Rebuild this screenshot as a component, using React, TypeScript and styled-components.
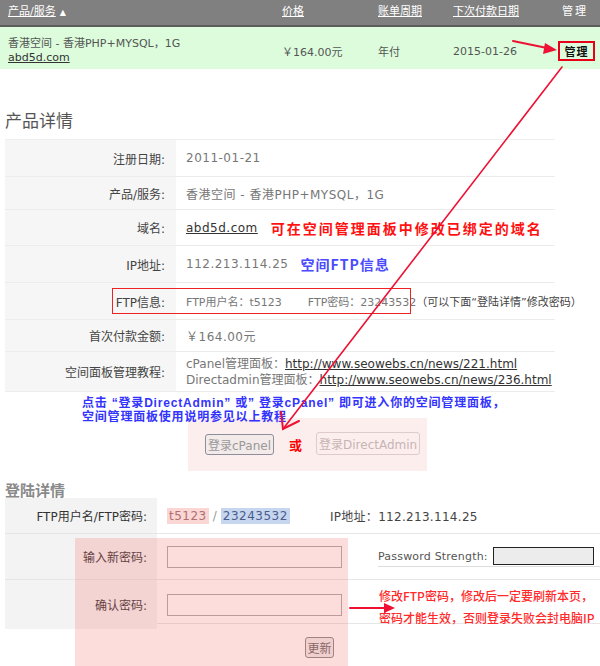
import styled, { createGlobalStyle, css } from "styled-components";

const GlobalStyle = createGlobalStyle`
  * {
    margin: 0;
    padding: 0;
    box-sizing: border-box;
  }

  body {
    background: #ffffff;
    font-family: "DejaVu Sans", "Noto Sans CJK SC", sans-serif;
    font-size: 12px;
    color: #555;
    overflow: hidden;
  }
`;

const Page = styled.div`
  position: relative;
  width: 600px;
  height: 666px;
  overflow: hidden;
`;

// tabela de produtos (topo)
const ProductRow = styled.div<{ $head?: boolean }>`
  display: grid;
  grid-template-columns: 274px 96px 75px 104px 1fr;
  align-items: center;
  padding-left: 8px;
  font-size: 11px;

  ${(p) =>
    p.$head
      ? css`
          height: 27px;
          padding-bottom: 5px;
          background: #808080;
          border-bottom: 2px solid #5c5c5c;
          color: #fff;
        `
      : css`
          height: 42px;
          padding-top: 6px;
          background: #dcfcdc;
          color: #555;
        `}
`;

const HeadLink = styled.span`
  text-decoration: underline;
  color: #fff;
  white-space: nowrap;
`;

const SortMark = styled.span`
  font-size: 8px;
  margin-left: 4px;
  display: inline-block;
`;

const HeadPlain = styled.span`
  padding-left: 5px;
  letter-spacing: 2px;
`;

const ProductName = styled.div`
  line-height: 14px;
  color: #555;
`;

const UnderLink = styled.span`
  color: #333;
  text-decoration: underline;
`;

const ManageBox = styled.span`
  display: inline-flex;
  align-items: center;
  justify-content: center;
  width: 37px;
  height: 20px;
  margin-left: 1px;
  border: 2px solid #e8001a;
  color: #111;
  font-weight: bold;
  font-size: 11px;
  letter-spacing: 1px;
`;

const SectionTitle = styled.h2`
  font-family: "Noto Sans CJK SC", sans-serif;
  font-size: 17px;
  font-weight: 400;
  color: #555;
  line-height: 20px;
  margin: 41px 0 9px 5px;
`;

// tabela de detalhes
const DetailTable = styled.div`
  width: 550px;
  margin-left: 5px;
  border-top: 1px solid #eee;
`;

const DetailRow = styled.div<{ $h: number }>`
  position: relative;
  display: grid;
  grid-template-columns: 171px 1fr;
  height: ${(p) => p.$h}px;
  border-bottom: 1px solid #ececec;
`;

const Label = styled.div`
  display: flex;
  align-items: center;
  justify-content: flex-end;
  padding-right: 11px;
  background: #f6f6f6;
  color: #444;
  font-size: 12px;
`;

const Value = styled.div<{ $small?: boolean }>`
  display: flex;
  align-items: center;
  padding-left: 10px;
  color: #777;
  white-space: nowrap;
  font-size: ${(p) => (p.$small ? "11px" : "12px")};
  letter-spacing: ${(p) => (p.$small ? "0" : "0.5px")};
`;

const ValueLines = styled.div`
  display: flex;
  flex-direction: column;
  justify-content: center;
  padding-left: 10px;
  color: #777;
  line-height: 16px;
  white-space: nowrap;
`;

const RedNote = styled.span`
  margin-left: 13px;
  font-family: "Noto Sans CJK SC", sans-serif;
  font-size: 14px;
  font-weight: bold;
  color: #ff1111;
  letter-spacing: 2px;
`;

const BlueNote = styled.span`
  margin-left: 12px;
  font-family: "Noto Sans CJK SC", sans-serif;
  font-size: 14px;
  font-weight: bold;
  color: #4a4aff;
  letter-spacing: 1px;
`;

const FtpHint = styled.span`
  color: #444;
  font-size: 11px;
  letter-spacing: 0;
`;

const Gap = styled.span<{ $w: number }>`
  display: inline-block;
  width: ${(p) => p.$w}px;
`;

const FtpFrame = styled.div`
  position: absolute;
  top: 5px;
  left: 107px;
  width: 299px;
  height: 26px;
  border: 1px solid #ee2222;
  pointer-events: none;
`;

const HintBlue = styled.p`
  padding-left: 82px;
  margin-top: 4px;
  font-family: "Liberation Sans", "Noto Sans CJK SC", sans-serif;
  font-size: 12px;
  font-weight: bold;
  line-height: 14px;
  color: #3333ff;
  letter-spacing: 0.8px;
  white-space: pre;
`;

const ButtonBox = styled.div`
  display: flex;
  align-items: center;
  width: 239px;
  height: 53px;
  margin: -6px 0 0 188px;
  padding-left: 17px;
  background: #fdeeee;
`;

const PanelButton = styled.button<{ $off?: boolean }>`
  height: ${(p) => (p.$off ? "23px" : "21px")};
  padding: 0 2px;
  border-radius: 3px;
  font-family: "DejaVu Sans", "Noto Sans CJK SC", sans-serif;
  font-size: 12px;
  background: ${(p) => (p.$off ? "transparent" : "#f3eaea")};
  border: 1px solid ${(p) => (p.$off ? "#dccccc" : "#8d8d9c")};
  color: ${(p) => (p.$off ? "#c6b4b4" : "#999")};
  margin-top: ${(p) => (p.$off ? "-3px" : "0")};
`;

const OrText = styled.span`
  margin: 0 14px 0 15px;
  font-family: "Noto Sans CJK SC", sans-serif;
  font-size: 13px;
  font-weight: bold;
  color: #f00;
`;

const SubTitle = styled.h3`
  font-family: "Noto Sans CJK SC", sans-serif;
  font-size: 15px;
  font-weight: bold;
  color: #8a8a8a;
  line-height: 18px;
  margin: 10px 0 -1px 5px;
`;

// detalhes de login
const LoginArea = styled.div`
  position: relative;
  padding-left: 5px;
`;

const LoginRow = styled.div<{ $h: number }>`
  display: grid;
  grid-template-columns: 152px 1fr;
  height: ${(p) => p.$h}px;
  border-bottom: 1px solid #e6e6e6;
`;

const LoginLabel = styled(Label)`
  padding-right: 10px;
  background: #f3f3f3;
  color: #333;
`;

const LoginValue = styled.div`
  display: flex;
  align-items: center;
  padding-left: 10px;
  color: #777;
  white-space: nowrap;
`;

const Tag = styled.span<{ $tone: "pink" | "blue" }>`
  padding: 1px 2px;
  font-size: 12px;
  letter-spacing: 0.5px;
  background: ${(p) => (p.$tone === "pink" ? "#fad6d4" : "#c6d6ef")};
  color: ${(p) => (p.$tone === "pink" ? "#b07070" : "#4a5c8c")};
`;

const Slash = styled.span`
  margin: 0 4px;
  color: #999;
`;

const IpText = styled.span`
  margin-left: 40px;
  color: #444;
  letter-spacing: 0.3px;
`;

const PassInput = styled.input`
  width: 175px;
  height: 22px;
  border: 1px solid #aaa;
  background: #fff;
  outline: none;
`;

const Strength = styled.div`
  display: flex;
  align-items: center;
  flex: 1;
  margin-left: 36px;
  height: 21px;
  border-bottom: 1px solid #ddd;
  font-size: 11px;
  color: #555;
  letter-spacing: 0.2px;
`;

const StrengthBar = styled.span`
  width: 101px;
  height: 18px;
  margin-left: 5px;
  background: #ececec;
  border: 1px solid #222;
`;

const WarnText = styled.p`
  margin-left: 37px;
  padding-top: 5px;
  font-family: "Noto Sans CJK SC", sans-serif;
  font-size: 12px;
  font-weight: 500;
  line-height: 22px;
  color: #ff2a2a;
  white-space: nowrap;
`;

const SubmitRow = styled.div`
  padding: 13px 0 0 300px;
`;

const SubmitButton = styled.button`
  width: 29px;
  height: 21px;
  border: 1px solid #888;
  border-radius: 3px;
  background: #eee;
  color: #666;
  font-family: "Noto Sans CJK SC", sans-serif;
  font-size: 12px;
`;

const PinkVeil = styled.div`
  position: absolute;
  top: 40px;
  left: 75px;
  width: 273px;
  height: 140px;
  background: rgba(248, 110, 110, 0.24);
  pointer-events: none;
`;

const Marks = styled.svg`
  position: absolute;
  top: 0;
  left: 0;
  pointer-events: none;
`;

export default function App() {
  return (
    <>
      <GlobalStyle />
      <Page>
        <ProductRow $head>
          <span>
            <HeadLink>产品/服务</HeadLink>
            <SortMark>▲</SortMark>
          </span>
          <HeadLink>价格</HeadLink>
          <HeadLink>账单周期</HeadLink>
          <HeadLink>下次付款日期</HeadLink>
          <HeadPlain>管理</HeadPlain>
        </ProductRow>
        <ProductRow>
          <ProductName>
            香港空间 - 香港PHP+MYSQL，1G
            <br />
            <UnderLink>abd5d.com</UnderLink>
          </ProductName>
          <span>￥164.00元</span>
          <span>年付</span>
          <span>2015-01-26</span>
          <span>
            <ManageBox>管理</ManageBox>
          </span>
        </ProductRow>

        <SectionTitle>产品详情</SectionTitle>

        <DetailTable>
          <DetailRow $h={37}>
            <Label>注册日期:</Label>
            <Value>2011-01-21</Value>
          </DetailRow>
          <DetailRow $h={33}>
            <Label>产品/服务:</Label>
            <Value>香港空间 - 香港PHP+MYSQL，1G</Value>
          </DetailRow>
          <DetailRow $h={36}>
            <Label>域名:</Label>
            <Value>
              <UnderLink>abd5d.com</UnderLink>
              <RedNote>可在空间管理面板中修改已绑定的域名</RedNote>
            </Value>
          </DetailRow>
          <DetailRow $h={37}>
            <Label>IP地址:</Label>
            <Value>
              112.213.114.25
              <BlueNote>空间FTP信息</BlueNote>
            </Value>
          </DetailRow>
          <DetailRow $h={37}>
            <Label>FTP信息:</Label>
            <Value $small>
              FTP用户名：t5123
              <Gap $w={26} />
              FTP密码：23243532
              <FtpHint>（可以下面“登陆详情”修改密码）</FtpHint>
            </Value>
            <FtpFrame />
          </DetailRow>
          <DetailRow $h={32}>
            <Label>首次付款金额:</Label>
            <Value>￥164.00元</Value>
          </DetailRow>
          <DetailRow $h={40}>
            <Label>空间面板管理教程:</Label>
            <ValueLines>
              <span>
                cPanel管理面板：
                <UnderLink>http://www.seowebs.cn/news/221.html</UnderLink>
              </span>
              <span>
                Directadmin管理面板：
                <UnderLink>http://www.seowebs.cn/news/236.html</UnderLink>
              </span>
            </ValueLines>
          </DetailRow>
        </DetailTable>

        <HintBlue>
          {"点击 “登录DirectAdmin” 或” 登录cPanel” 即可进入你的空间管理面板，"}
          <br />
          空间管理面板使用说明参见以上教程
        </HintBlue>

        <ButtonBox>
          <PanelButton>登录cPanel</PanelButton>
          <OrText>或</OrText>
          <PanelButton $off>登录DirectAdmin</PanelButton>
        </ButtonBox>

        <SubTitle>登陆详情</SubTitle>

        <LoginArea>
          <LoginRow $h={36}>
            <LoginLabel>FTP用户名/FTP密码:</LoginLabel>
            <LoginValue>
              <Tag $tone="pink">t5123</Tag>
              <Slash>/</Slash>
              <Tag $tone="blue">23243532</Tag>
              <IpText>IP地址：112.213.114.25</IpText>
            </LoginValue>
          </LoginRow>
          <LoginRow $h={46}>
            <LoginLabel>输入新密码:</LoginLabel>
            <LoginValue>
              <PassInput type="password" />
              <Strength>
                Password Strength:
                <StrengthBar />
              </Strength>
            </LoginValue>
          </LoginRow>
          <LoginRow $h={44}>
            <LoginLabel>确认密码:</LoginLabel>
            <LoginValue>
              <PassInput type="password" />
              <WarnText>
                修改FTP密码，修改后一定要刷新本页，
                <br />
                密码才能生效，否则登录失败会封电脑IP
              </WarnText>
            </LoginValue>
          </LoginRow>
          <SubmitRow>
            <SubmitButton>更新</SubmitButton>
          </SubmitRow>
          <PinkVeil />
        </LoginArea>

        <Marks width="600" height="666" viewBox="0 0 600 666">
          <g stroke="#ee1133" fill="#ee1133" strokeLinecap="round">
            <line x1="513" y1="41" x2="547" y2="48" strokeWidth="2" />
            <polygon points="557,50 545,43 543,54" stroke="none" />
            <line x1="562" y1="67" x2="283" y2="429" strokeWidth="1.6" />
            <polyline
              points="281,412 283,429 299,421"
              fill="none"
              strokeWidth="2"
            />
            <line x1="350" y1="608" x2="385" y2="608" strokeWidth="2" />
            <polygon points="395,608 384,603 384,613" stroke="none" />
          </g>
        </Marks>
      </Page>
    </>
  );
}
